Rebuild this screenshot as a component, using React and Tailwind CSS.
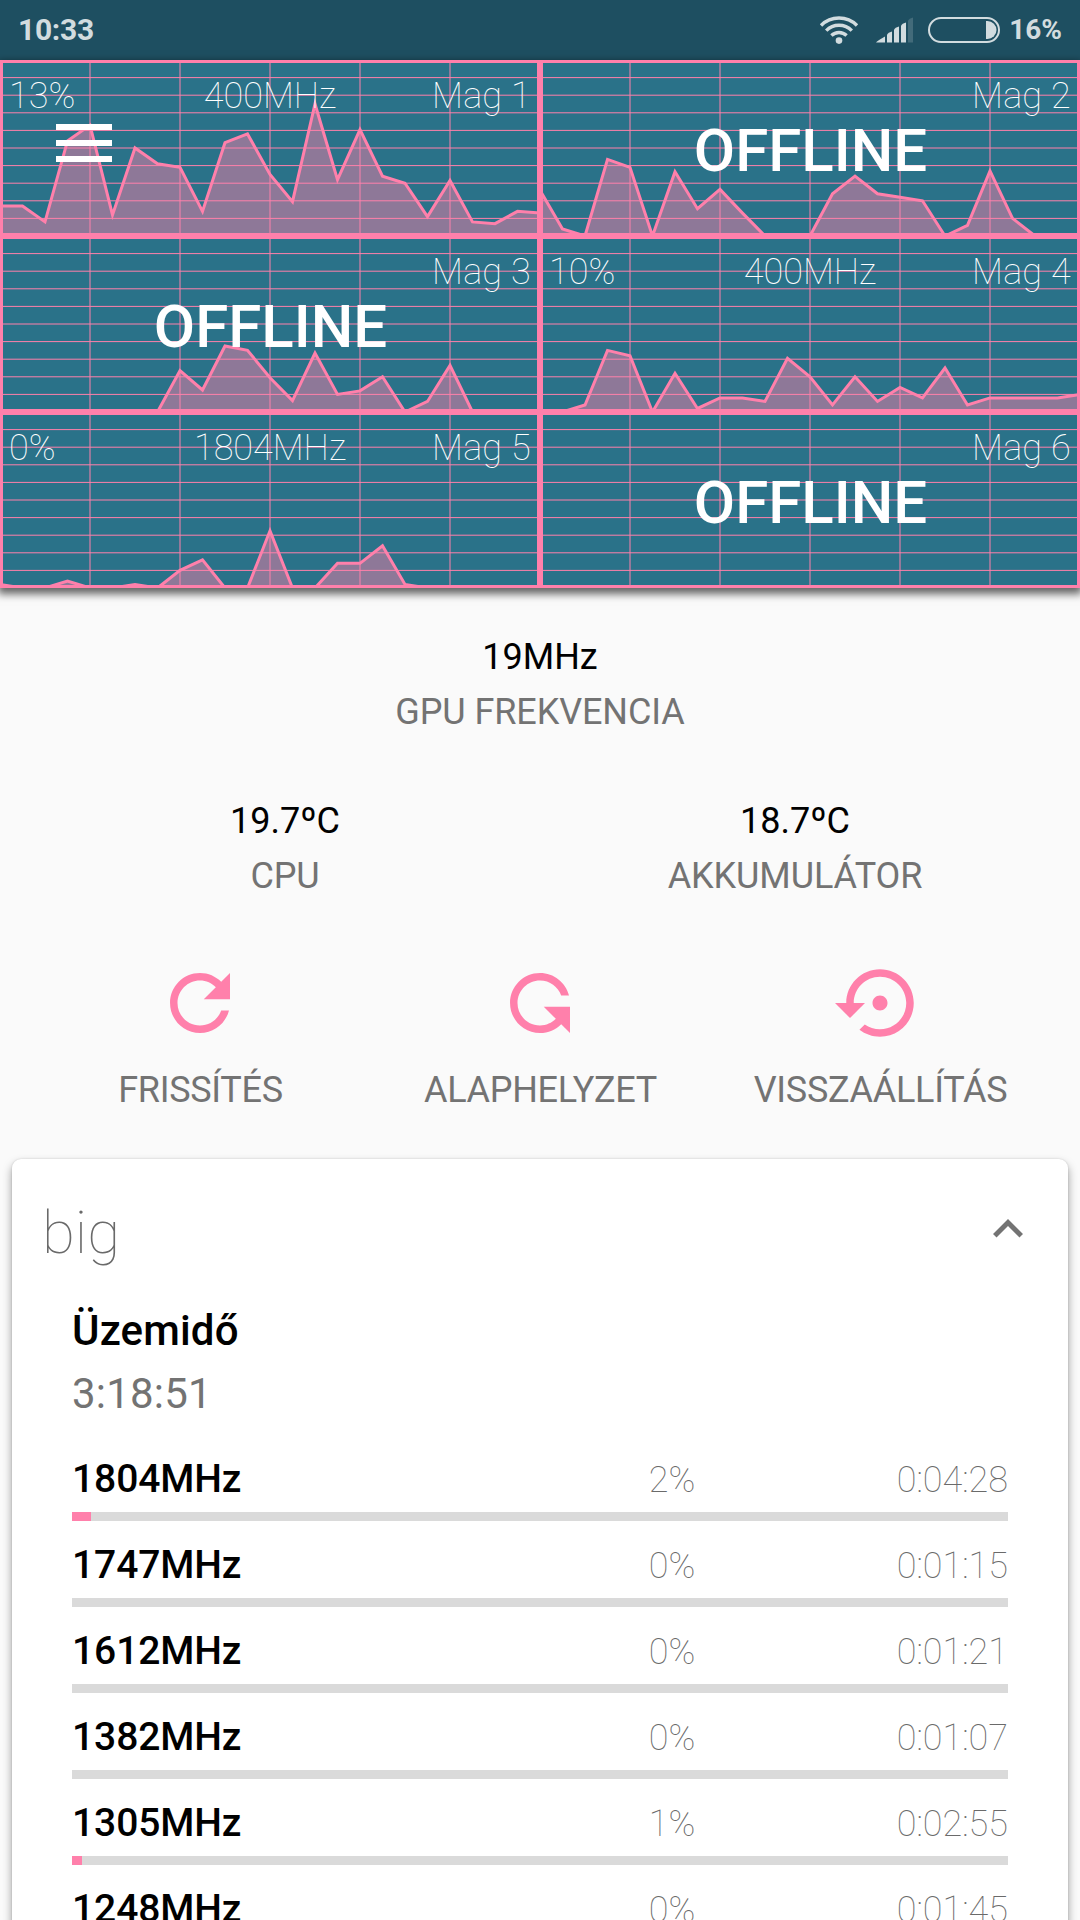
import React from "react";

const PINK = "#ff80ab";

const cores = [
  {
    name: "Mag 1",
    load: "13%",
    freq: "400MHz",
    data: [17, 17, 8, 54, 63, 12, 50, 41, 39, 14, 53, 58, 35, 19.5, 75, 32, 60.5, 34, 30, 11, 31.5, 8, 7, 14, 13],
  },
  {
    name: "Mag 2",
    data: [26, 4, 0, 43.5, 39, 0, 36.5, 15.5, 26.5, 13, 0, 0, 0, 24, 34, 24, 22, 20, 0, 6, 37, 10, 0, 0, 0],
  },
  {
    name: "Mag 3",
    data: [0, 0, 0, 0, 0, 0, 0, 0, 23.5, 12.5, 37.5, 35, 19.5, 6.5, 33.5, 10, 12, 20, 0, 6, 26.5, 0, 0, 0, 0],
  },
  {
    name: "Mag 4",
    load: "10%",
    freq: "400MHz",
    data: [0, 0, 4, 35, 32, 0, 22, 2, 8, 8, 6, 30.5, 20, 4, 20, 6, 14, 8, 25, 4, 8, 8, 8, 8, 10],
  },
  {
    name: "Mag 5",
    load: "0%",
    freq: "1804MHz",
    data: [2, 0, 0, 4, 0, 0, 2, 0, 10, 16, 0, 0, 32.5, 0, 0, 14, 14, 24, 2, 0, 0, 0, 0, 0, 0],
  },
  {
    name: "Mag 6",
    data: [0, 0, 0, 0, 0, 0, 0, 0, 0, 0, 0, 0, 0, 0, 0, 0, 0, 0, 0, 0, 0, 0, 0, 0, 0],
  },
];

const states = [
  { freq: "1804MHz", pct: 2, time: "0:04:28" },
  { freq: "1747MHz", pct: 0, time: "0:01:15" },
  { freq: "1612MHz", pct: 0, time: "0:01:21" },
  { freq: "1382MHz", pct: 0, time: "0:01:07" },
  { freq: "1305MHz", pct: 1, time: "0:02:55" },
  { freq: "1248MHz", pct: 0, time: "0:01:45" },
];

function Graph({ data }) {
  const line = data.map((p, i) => `${i * 22.5},${(176 * (1 - p / 100)).toFixed(2)}`).join(" L");
  return (
    <svg className="absolute inset-0" width="540" height="176" viewBox="0 0 540 176" fill="none">
      <path d={`M${line} L540,176 L0,176 Z`} fill={PINK} fillOpacity="0.47" />
      {[1, 2, 3, 4, 5, 6, 7, 8, 9].map((i) => (
        <path key={`h${i}`} d={`M0 ${i * 17.6}H540`} stroke={PINK} strokeWidth="1" />
      ))}
      {[90, 180, 270, 360, 450].map((x) => (
        <path key={`v${x}`} d={`M${x} 0V176`} stroke={PINK} strokeWidth="1" />
      ))}
      <path d={`M${line}`} stroke={PINK} strokeWidth="3" />
      <rect x="1.5" y="1.5" width="537" height="173" stroke={PINK} strokeWidth="3" />
    </svg>
  );
}

function CoreCell({ core }) {
  return (
    <div className="relative h-[176px] overflow-hidden bg-[#2a7289] text-white">
      <Graph data={core.data} />
      <div className="relative grid grid-cols-3 px-[9px] pt-[15px] text-[36px] leading-[42px] font-thin">
        <span>{core.load}</span>
        <span className="text-center">{core.freq}</span>
        <span className="text-right tracking-[0.2px]">{core.name}</span>
      </div>
      {!core.load && (
        <div className="relative -mt-px pl-px text-center text-[60px] leading-[70px] font-medium">OFFLINE</div>
      )}
    </div>
  );
}

function StatusBar() {
  return (
    <header className="flex h-[60px] shrink-0 items-center bg-[#1e4f61] px-[18px] text-[#d2dcdf]">
      <span className="text-[30px] leading-[36px] font-bold tracking-[-0.3px]">10:33</span>
      <svg className="ml-auto" width="40" height="30" viewBox="0 0 40 30" fill="none" stroke="currentColor" strokeWidth="3.4">
        <path d="M2 10.5A25.5 25.5 0 0 1 38 10.5" />
        <path d="M7.2 15.6A18 18 0 0 1 32.8 15.6" />
        <path d="M12.4 20.6A11 11 0 0 1 27.6 20.6" />
        <circle cx="20" cy="25.6" r="3.3" fill="currentColor" stroke="none" />
      </svg>
      <svg className="ml-[17px]" width="38" height="28" viewBox="0 0 38 28" fill="currentColor">
        <path d="M0 26.500Q1 25 9 20.500V26.500Z" />
        <path d="M11 18.500Q12 16.500 16 15.500V26.500H11Z" />
        <path d="M18 13.500Q19 11.500 23 10.500V26.500H18Z" />
        <path d="M25 9.500Q26 7.500 30 6.500V26.500H25Z" />
        <path d="M32 4.500Q33 2.500 37 1.500V26.500H32Z" opacity="0.2" />
      </svg>
      <svg className="ml-[13px]" width="74" height="28" viewBox="0 0 74 28" fill="none">
        <rect x="2" y="2" width="70" height="24" rx="12" stroke="currentColor" strokeWidth="2" />
        <path d="M59 5h1.500a9 9 0 0 1 0 18H59Z" fill="currentColor" />
      </svg>
      <span className="ml-[8px] text-[28px] leading-[36px] font-bold">16%</span>
    </header>
  );
}

function Stat({ value, label }) {
  return (
    <div className="flex flex-1 flex-col items-center text-[36px] leading-[42px]">
      <span className="text-black">{value}</span>
      <span className="mt-[13px] tracking-[-0.1px] text-[#737373]">{label}</span>
    </div>
  );
}

const REFRESH =
  "M17.65 6.35C16.2 4.9 14.21 4 12 4c-4.42 0-7.99 3.58-7.99 8s3.57 8 7.99 8c3.73 0 6.84-2.55 7.73-6h-2.08c-.82 2.33-3.04 4-5.65 4-3.31 0-6-2.69-6-6s2.69-6 6-6c1.66 0 3.14.69 4.22 1.78L13 11h7V4l-2.35 2.35z";
const RESTORE =
  "M14 12c0-1.1-.9-2-2-2s-2 .9-2 2 .9 2 2 2 2-.9 2-2zm-2-9c-4.97 0-9 4.03-9 9H0l4 4 4-4H5c0-3.87 3.13-7 7-7s7 3.13 7 7-3.13 7-7 7c-1.51 0-2.91-.49-4.06-1.3l-1.42 1.44C8.04 20.3 9.94 21 12 21c4.97 0 9-4.03 9-9s-4.03-9-9-9z";

function Action({ path, label, flip }) {
  return (
    <button className="flex flex-1 flex-col items-center text-[36px] leading-[42px] text-[#737373]">
      <svg className={flip ? "-scale-y-100" : ""} width="90" height="90" viewBox="0 0 24 24" fill={PINK}>
        <path d={path} />
      </svg>
      <span className="mt-[21px] pl-px tracking-[-0.28px]">{label}</span>
    </button>
  );
}

export default function App() {
  return (
    <div className="flex h-[1920px] w-[1080px] flex-col overflow-hidden bg-[#fafafa] font-['Roboto',sans-serif]">
      <StatusBar />

      <section className="relative grid shrink-0 grid-cols-2 shadow-[0_4px_8px_2px_rgba(0,0,0,0.6)]">
        {cores.map((c) => (
          <CoreCell key={c.name} core={c} />
        ))}
        <button className="absolute top-[64px] left-[56px] flex w-[56px] flex-col gap-[10px]">
          <span className="h-[6px] w-full bg-white" />
          <span className="h-[6px] w-full bg-white" />
          <span className="h-[6px] w-full bg-white" />
        </button>
      </section>

      <section className="shrink-0 px-[30px] pt-[48px]">
        <div className="flex">
          <Stat value="19MHz" label="GPU FREKVENCIA" />
        </div>
        <div className="mt-[67px] flex">
          <Stat value="19.7ºC" label="CPU" />
          <Stat value="18.7ºC" label="AKKUMULÁTOR" />
        </div>
        <div className="mt-[61px] flex">
          <Action path={REFRESH} label="FRISSÍTÉS" />
          <Action path={REFRESH} label="ALAPHELYZET" flip />
          <Action path={RESTORE} label="VISSZAÁLLÍTÁS" />
        </div>
      </section>

      <section className="mx-[12px] mt-[48px] h-[900px] shrink-0 rounded-[9px] bg-white shadow-[0_5px_10px_rgba(0,0,0,0.38),0_0_2px_rgba(0,0,0,0.15)]">
        <div className="flex items-center justify-between pt-[39px] pr-[30px] pl-[30px]">
          <h2 className="text-[60px] leading-[70px] font-thin text-[#6a6a6a]">big</h2>
          <svg className="-mt-[8px]" width="60" height="60" viewBox="0 0 24 24" fill="#737373">
            <path d="M12 8l-6 6 1.410 1.410L12 10.830l4.590 4.580L18 14z" />
          </svg>
        </div>
        <div className="mt-[38px] px-[60px]">
          <h3 className="text-[42px] leading-[50px] font-medium tracking-[0.15px] text-black">Üzemidő</h3>
          <p className="mt-[13px] text-[42px] leading-[50px] tracking-[0.2px] text-[#737373]">3:18:51</p>
          <ul className="mt-[36px]">
            {states.map((s) => (
              <li key={s.freq} className="h-[86px]">
                <div className="flex h-[57px] items-baseline text-[36px] leading-[48px] font-thin text-[#6a6a6a]">
                  <span className="w-[468px] text-[39px] font-medium tracking-[-0.1px] text-black">{s.freq}</span>
                  <span className="w-[264px] text-center">{s.pct}%</span>
                  <span className="flex-1 text-right">{s.time}</span>
                </div>
                <div className="h-[9px] bg-[#dadada]">
                  <div className="h-full bg-[#ff80ab]" style={{ width: `${Math.ceil(s.pct * 9.36)}px` }} />
                </div>
              </li>
            ))}
          </ul>
        </div>
      </section>
    </div>
  );
}
